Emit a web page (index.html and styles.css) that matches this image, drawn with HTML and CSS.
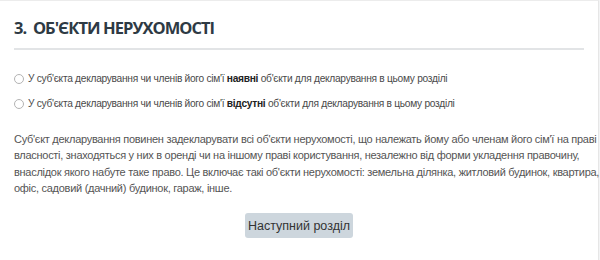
FILE: index.html
```html
<!DOCTYPE html>
<html lang="uk">
<head>
  <meta charset="UTF-8" />
  <title>Об'єкти нерухомості</title>
  <link rel="stylesheet" href="styles.css">
</head>
<body>
  <main class="panel">
    <h2 class="section-title">3.&nbsp; Об'єкти нерухомості</h2>

    <label class="choice">
      <input type="radio" name="presence" />
      <span>У суб'єкта декларування чи членів його сім'ї <b>наявні</b> об'єкти для декларування в цьому розділі</span>
    </label>
    <label class="choice">
      <input type="radio" name="presence" />
      <span>У суб'єкта декларування чи членів його сім'ї <b>відсутні</b> об'єкти для декларування в цьому розділі</span>
    </label>

    <p class="note">
      Суб'єкт декларування повинен задекларувати всі об'єкти нерухомості, що належать йому або членам його сім'ї на праві<br>
      власності, знаходяться у них в оренді чи на іншому праві користування, незалежно від форми укладення правочину,<br>
      внаслідок якого набуте таке право. Це включає такі об'єкти нерухомості: земельна ділянка, житловий будинок, квартира,<br>
      офіс, садовий (дачний) будинок, гараж, інше.
    </p>

    <div class="actions">
      <button class="next-btn">Наступний розділ</button>
    </div>
  </main>
</body>
</html>
```

FILE: styles.css
```css
body {
  margin: 0;
  background: #f3f4f5;
  font-family: "Liberation Sans", Arial, sans-serif;
}
.panel {
  background: white;
  margin-right: 1px;
  border-top: 1px solid #ececec;
  border-right: 1px solid #e6e6e6;
  padding: 0 14px 30px 14px;
  height: 260px;
  box-sizing: border-box;
}
.section-title {
  margin: 0;
  padding: 17px 0 10px 0;
  font-family: "Open Sans", sans-serif;
  font-weight: 700;
  font-size: 16.5px;
  letter-spacing: -0.95px;
  line-height: 20px;
  text-transform: uppercase;
  color: #2e3a44;
  border-bottom: 2px solid #e2e4e6;
}
.choice {
  display: flex;
  align-items: center;
  gap: 3px;
  font-size: 10.2px;
  letter-spacing: -0.28px;
  color: #4a4a4a;
  height: 25px;
  margin: 0;
  white-space: nowrap;
}
.choice:first-of-type {
  margin-top: 16px;
}
.choice input {
  margin: 0 1px 0 0;
  width: 10px;
  height: 10px;
  accent-color: #bbb;
  opacity: 0.55;
}
.choice b {
  color: #222;
}
.note {
  margin: 15px 0 0 0;
  font-size: 11px;
  letter-spacing: -0.28px;
  line-height: 16.3px;
  color: #555;
  white-space: nowrap;
}
.actions {
  display: flex;
  justify-content: center;
  margin-top: 17px;
}
.next-btn {
  background: #cdd6dd;
  border: none;
  border-radius: 3px;
  width: 108px;
  height: 25px;
  padding: 0;
  white-space: nowrap;
  font-family: "Liberation Sans", Arial, sans-serif;
  font-size: 12.5px;
  color: #333;
  cursor: pointer;
}
```
